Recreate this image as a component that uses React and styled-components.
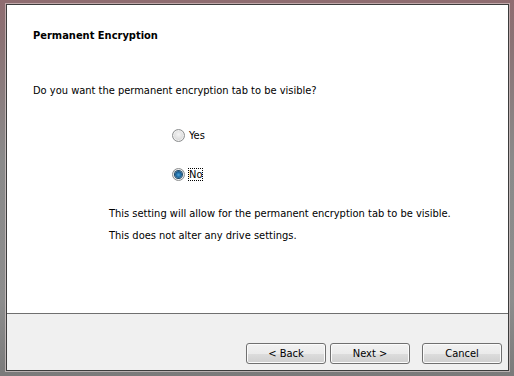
import React, { useState } from 'react';
import styled, { createGlobalStyle } from 'styled-components';

const GlobalStyle = createGlobalStyle`
  html, body {
    margin: 0;
    padding: 0;
    background: #7d7d7d;
  }
  * {
    box-sizing: border-box;
  }
`;

const Frame = styled.div`
  width: 514px;
  height: 376px;
  padding: 4px 5px 5px 6px;
  background:
    linear-gradient(180deg, #8f6c70 0px, #8a7274 40px, #8a8a8a 160px, #8d8d8d 300px, #7a7a7a 376px);
  font-family: "DejaVu Sans Condensed", "DejaVu Sans", Tahoma, sans-serif;
  font-size: 11px;
  color: #000;
`;

const Client = styled.div`
  height: 100%;
  display: flex;
  flex-direction: column;
  border: 1px solid #3c3c3c;
  box-shadow: 0 0 0 1px rgba(235, 220, 220, 0.55);
  background: #f0f0f0;
`;

const Body = styled.div`
  flex: 1;
  background: #fff;
  padding: 24px 26px 0;
  border-bottom: 1px solid #6f6f6f;
`;

const Title = styled.div`
  font-weight: bold;
  line-height: 13px;
`;

const Question = styled.div`
  margin-top: 42px;
  line-height: 13px;
`;

const Options = styled.div`
  margin: 32px 0 0 139px;
  display: flex;
  flex-direction: column;
  gap: 26px;
`;

const Option = styled.label`
  display: flex;
  align-items: center;
  height: 13px;
  gap: 1px;
  cursor: default;
`;

const Radio = styled.span`
  position: relative;
  width: 13px;
  height: 13px;
  border-radius: 50%;
  border: 1px solid #8c8e8f;
  background: radial-gradient(circle at 50% 40%, #f4f4f4 0%, #dedede 55%, #c9c9c9 100%);
  box-shadow: inset 0 0 0 1px #f0f0f0;

  &::after {
    content: '';
    display: ${(p) => (p.checked ? 'block' : 'none')};
    position: absolute;
    left: 2px;
    top: 2px;
    width: 7px;
    height: 7px;
    border-radius: 50%;
    background: radial-gradient(circle at 50% 55%, #4fa6d8 0%, #1f6ca6 45%, #12334f 100%);
    box-shadow: 0 0 0 1px #1e4a68;
  }
`;

const OptionText = styled.span`
  margin-left: 2px;
  line-height: 11px;
  border: 1px dotted ${(p) => (p.focused ? '#000' : 'transparent')};
`;

const Note = styled.div`
  margin: 26px 0 0 76px;
  display: flex;
  flex-direction: column;
  gap: 9px;
  line-height: 13px;
`;

const Footer = styled.div`
  height: 56px;
  display: flex;
  justify-content: flex-end;
  align-items: flex-end;
  padding: 0 6px 6px 0;
`;

const Button = styled.button`
  width: 80px;
  height: 21px;
  margin-left: ${(p) => p.gap || 0}px;
  padding: 0;
  border: 1px solid #707070;
  border-radius: 3px;
  background: linear-gradient(180deg, #f2f2f2 0%, #ebebeb 50%, #dddddd 51%, #cfcfcf 100%);
  box-shadow: inset 0 0 0 1px #fbfbfb;
  font-family: inherit;
  font-size: 11px;
  color: #000;
  line-height: 19px;
`;

export default function App() {
  const [visible, setVisible] = useState('no');

  return (
    <>
      <GlobalStyle />
      <Frame>
        <Client>
          <Body>
            <Title>Permanent Encryption</Title>
            <Question>Do you want the permanent encryption tab to be visible?</Question>
            <Options>
              <Option onClick={() => setVisible('yes')}>
                <Radio checked={visible === 'yes'} />
                <OptionText focused={visible === 'yes'}>Yes</OptionText>
              </Option>
              <Option onClick={() => setVisible('no')}>
                <Radio checked={visible === 'no'} />
                <OptionText focused={visible === 'no'}>No</OptionText>
              </Option>
            </Options>
            <Note>
              <div>This setting will allow for the permanent encryption tab to be visible.</div>
              <div>This does not alter any drive settings.</div>
            </Note>
          </Body>
          <Footer>
            <Button>&lt; Back</Button>
            <Button gap={4}>Next &gt;</Button>
            <Button gap={12}>Cancel</Button>
          </Footer>
        </Client>
      </Frame>
    </>
  );
}
